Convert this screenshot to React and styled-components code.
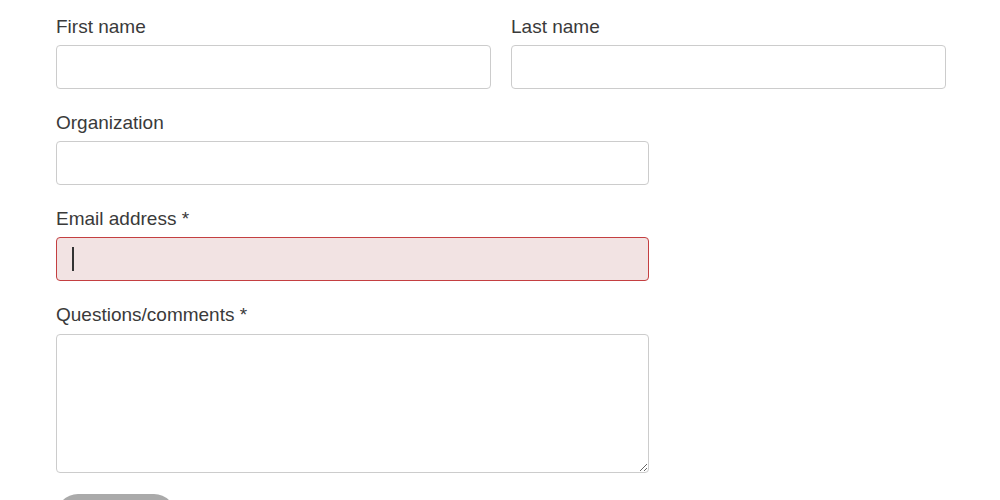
import React from "react";
import styled, { createGlobalStyle } from "styled-components";

const GlobalStyle = createGlobalStyle`
  body {
    margin: 0;
    background: #fff;
    font-family: "Liberation Sans", Arial, sans-serif;
    color: #3a3a3a;
  }
`;

const ContactForm = () => {
  return (
    <Form onSubmit={(e) => e.preventDefault()}>
      <Row $cols={2}>
        <Field>
          <Label htmlFor="first">First name</Label>
          <Input id="first" type="text" />
        </Field>
        <Field>
          <Label htmlFor="last">Last name</Label>
          <Input id="last" type="text" />
        </Field>
      </Row>
      <Row>
        <Field>
          <Label htmlFor="org">Organization</Label>
          <Input id="org" type="text" />
        </Field>
      </Row>
      <Row>
        <Field>
          <Label htmlFor="email">Email address *</Label>
          <InputWrap>
            <Input id="email" type="email" $error />
            <Caret />
          </InputWrap>
        </Field>
      </Row>
      <Row>
        <Field>
          <Label htmlFor="comments">Questions/comments *</Label>
          <TextArea id="comments" />
        </Field>
      </Row>
      <Submit type="submit">Submit</Submit>
    </Form>
  );
};

const Form = styled.form`
  width: 890px;
  padding: 13px 0 0 56px;
  display: flex;
  flex-direction: column;
  gap: 20px;
`;
const Row = styled.div`
  display: grid;
  grid-template-columns: ${(p) => (p.$cols === 2 ? "1fr 1fr" : "593px")};
  column-gap: 20px;
`;
const Field = styled.div`
  display: flex;
  flex-direction: column;
`;
const Label = styled.label`
  font-size: 19px;
  line-height: 27px;
  margin-bottom: 5px;
`;
const InputWrap = styled.div`
  position: relative;
`;
const Input = styled.input`
  box-sizing: border-box;
  width: 100%;
  height: 44px;
  padding: 0 15px;
  font-family: inherit;
  font-size: 19px;
  border: 1px solid ${(p) => (p.$error ? "#c43f41" : "#cccccc")};
  background: ${(p) => (p.$error ? "#f2e3e3" : "#fff")};
  border-radius: 4px;
  outline: none;
`;
const Caret = styled.span`
  position: absolute;
  left: 16px;
  top: 10px;
  width: 2px;
  height: 24px;
  background: #333;
`;
const TextArea = styled.textarea`
  box-sizing: border-box;
  width: 100%;
  height: 139px;
  margin-top: 1px;
  padding: 10px 15px;
  font-family: inherit;
  font-size: 19px;
  border: 1px solid #cccccc;
  border-radius: 4px;
  outline: none;
`;
const Submit = styled.button`
  width: 120px;
  height: 44px;
  margin-top: 1px;
  border: none;
  border-radius: 22px;
  background: #aaaaaa;
  color: #fff;
  font-family: inherit;
  font-size: 18px;
  cursor: pointer;
`;

export default function App() {
  return (
    <>
      <GlobalStyle />
      <ContactForm />
    </>
  );
}
